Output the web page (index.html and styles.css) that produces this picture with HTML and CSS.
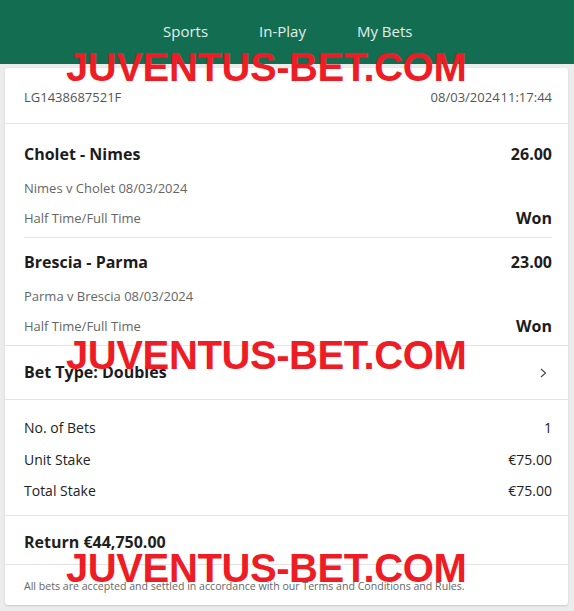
FILE: index.html
```html
<!DOCTYPE html>
<html>

<head>
  <meta charset="UTF-8">
  <meta name="viewport" content="width=device-width, initial-scale=1">
  <title>Bet receipt</title>
  <link rel="stylesheet" href="styles.css">
</head>

<body>

  <header class="topbar">
    <nav class="nav">
      <a class="nav-link">Sports</a>
      <a class="nav-link">In-Play</a>
      <a class="nav-link">My Bets</a>
    </nav>
  </header>

  <main class="page">

    <section class="slip">

      <div class="slip-ref">
        <span>LG1438687521F</span>
        <span class="slip-date"><span>08/03/2024</span><span>11:17:44</span></span>
      </div>

      <div class="selections">
        <div class="selection">
          <div class="line">
            <span class="strong">Cholet - Nimes</span>
            <span class="strong">26.00</span>
          </div>
          <div class="line sub">Nimes v Cholet 08/03/2024</div>
          <div class="line market">
            <span>Half Time/Full Time</span>
            <span class="strong">Won</span>
          </div>
        </div>

        <div class="selection">
          <div class="line">
            <span class="strong">Brescia - Parma</span>
            <span class="strong">23.00</span>
          </div>
          <div class="line sub">Parma v Brescia 08/03/2024</div>
          <div class="line market">
            <span>Half Time/Full Time</span>
            <span class="strong">Won</span>
          </div>
        </div>
      </div>

      <div class="bet-type">
        <span class="strong">Bet Type: Doubles</span>
        <svg class="chevron" width="7" height="10" viewBox="0 0 7 10">
          <path d="M1 1 L5.5 5 L1 9" fill="none" stroke="#444" stroke-width="1.1" />
        </svg>
      </div>

      <div class="stakes">
        <div class="stake-row"><span>No. of Bets</span><span>1</span></div>
        <div class="stake-row"><span>Unit Stake</span><span>€75.00</span></div>
        <div class="stake-row"><span>Total Stake</span><span>€75.00</span></div>
      </div>

      <div class="return">Return €44,750.00</div>

      <p class="terms">All bets are accepted and settled in accordance with our Terms and Conditions and Rules.</p>

    </section>

  </main>

  <!-- watermark stamped over the receipt -->
  <div class="mark mark-1">JUVENTUS-BET.COM</div>
  <div class="mark mark-2">JUVENTUS-BET.COM</div>
  <div class="mark mark-3">JUVENTUS-BET.COM</div>

</body>

</html>
```

FILE: styles.css
```css
body {
  margin: 0;
  background: #ebeceb;
  color: #1f1f1f;
  font-family: 'Open Sans', sans-serif;
  position: relative;
}

.topbar {
  background: #136d51;
  height: 64px;
}

.nav {
  display: flex;
  gap: 51px;
  padding-left: 163px;
  line-height: 63px;
}

.nav-link {
  color: #e3efe9;
  font-size: 15px;
  text-decoration: none;
}

.page {
  padding: 4px 6px 5px 5px;
}

.slip {
  background: #fff;
  border-radius: 3px;
  box-shadow: 0 1px 2px rgba(0, 0, 0, 0.15);
}

.slip-ref {
  display: flex;
  justify-content: space-between;
  padding: 20px 16px 16px 19px;
  line-height: 19px;
  font-size: 13px;
  color: #555;
  border-bottom: 1px solid #e4e4e4;
}

.slip-date {
  display: flex;
  gap: 1px;
}

.selections {
  padding: 6px 16px 0 19px;
  border-bottom: 1px solid #e4e4e4;
}

.selection {
  padding: 14px 0 9px;
}

.selection+.selection {
  border-top: 1px solid #e4e4e4;
}

.line {
  display: flex;
  justify-content: space-between;
  align-items: center;
  line-height: 20px;
}

.strong {
  font-weight: 700;
  font-size: 16px;
  color: #1c1c1c;
}

.sub {
  margin-top: 15px;
  line-height: 18px;
  font-size: 13px;
  color: #666;
}

.market {
  margin-top: 11px;
  font-size: 13px;
  color: #666;
}

.bet-type {
  display: flex;
  justify-content: space-between;
  align-items: center;
  padding: 16px 21px 16px 19px;
  line-height: 21px;
  border-bottom: 1px solid #e4e4e4;
}

.chevron {
  display: block;
}

.stakes {
  display: flex;
  flex-direction: column;
  gap: 11.5px;
  padding: 18px 16px 14px 19px;
  border-bottom: 1px solid #e4e4e4;
  font-size: 14px;
  color: #222;
}

.stake-row {
  display: flex;
  justify-content: space-between;
  line-height: 20px;
}

.return {
  padding: 15px 16px 11px 19px;
  line-height: 22px;
  font-size: 16px;
  font-weight: 700;
  border-bottom: 1px solid #e4e4e4;
}

.terms {
  margin: 0;
  padding: 13px 16px 11px 19px;
  line-height: 16px;
  font-size: 10.6px;
  color: #666;
}

.mark {
  position: absolute;
  left: 66px;
  font-family: 'Liberation Sans', sans-serif;
  font-weight: 700;
  font-size: 40px;
  line-height: 40px;
  letter-spacing: -0.4px;
  color: #ee1c25;
  white-space: nowrap;
  pointer-events: none;
}

.mark-1 {
  top: 47px;
}

.mark-2 {
  top: 335px;
}

.mark-3 {
  top: 548px;
}
```
